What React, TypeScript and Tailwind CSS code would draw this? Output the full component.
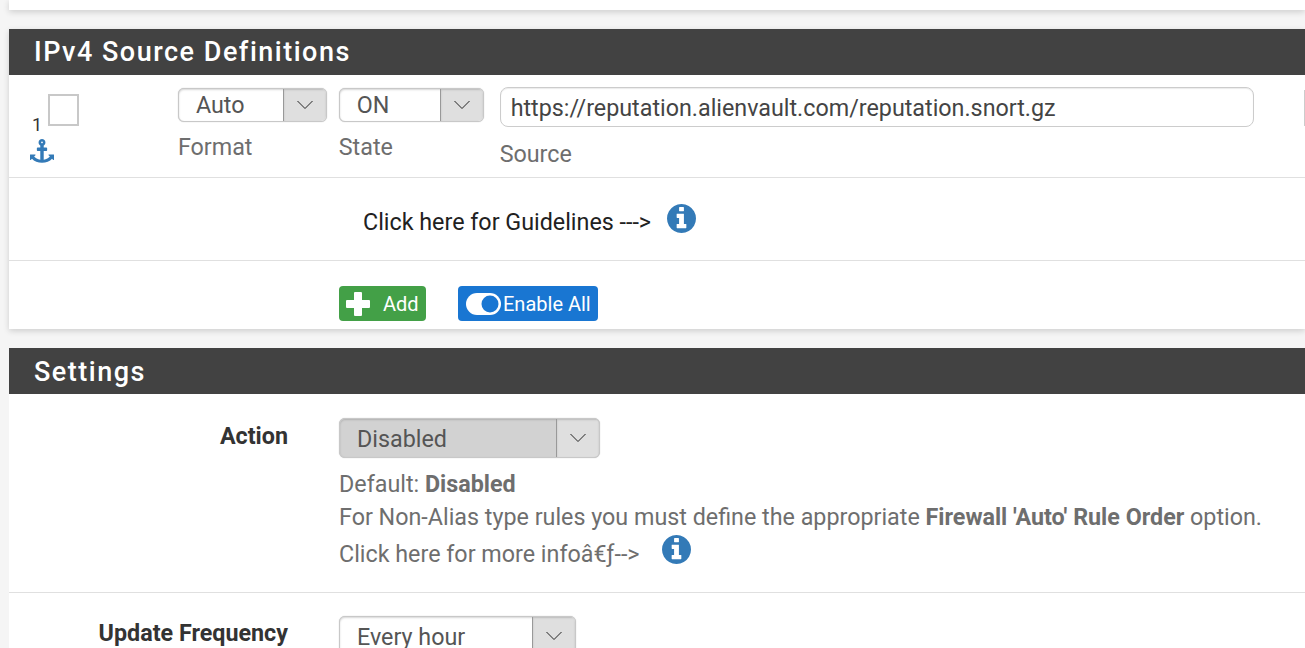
interface SelectProps {
  value: string
  width: string
  height: string
  arrow: string
  disabled?: boolean
  tall?: boolean
}

function InfoIcon({ className }: { className: string }) {
  return (
    <svg className={className} viewBox="0 128 1536 1536" fill="currentColor">
      <path d="M1024 1376v-160q0-14-9-23t-23-9h-96v-512q0-14-9-23t-23-9h-320q-14 0-23 9t-9 23v160q0 14 9 23t23 9h96v320h-96q-14 0-23 9t-9 23v160q0 14 9 23t23 9h448q14 0 23-9t9-23zm-128-896v-160q0-14-9-23t-23-9h-192q-14 0-23 9t-9 23v160q0 14 9 23t23 9h192q14 0 23-9t9-23zm640 416q0 209-103 385.5t-279.5 279.5-385.5 103-385.5-103-279.5-279.5-103-385.5 103-385.5 279.5-279.5 385.5-103 385.5 103 279.5 279.5 103 385.5z" />
    </svg>
  )
}

function AnchorIcon({ className }: { className: string }) {
  return (
    <svg className={className} viewBox="0 0 1792 1792" fill="currentColor">
      <path d="M960 256q0-26-19-45t-45-19-45 19-19 45 19 45 45 19 45-19 19-45zm832 928v352q0 22-20 30-8 2-12 2-12 0-23-9l-93-93q-119 143-318.5 226.5t-429.5 83.5-429.5-83.5-318.5-226.5l-93 93q-9 9-23 9-4 0-12-2-20-8-20-30v-352q0-14 9-23t23-9h352q22 0 30 20 8 19-7 35l-100 100q67 91 189.5 153.5t271.5 82.5v-647h-192q-26 0-45-19t-19-45v-128q0-26 19-45t45-19h192v-163q-58-34-93-92.5t-35-128.5q0-106 75-181t181-75 181 75 75 181q0 70-35 128.5t-93 92.5v163h192q26 0 45 19t19 45v128q0 26-19 45t-45 19h-192v647q149-20 271.5-82.5t189.5-153.5l-100-100q-15-16-7-35 8-20 30-20h352q14 0 23 9t9 23z" />
    </svg>
  )
}

function FakeSelect({ value, width, height, arrow, disabled, tall }: SelectProps) {
  return (
    <div
      className={`flex ${width} ${height} overflow-hidden rounded-[6px] border border-[#c8c8c8] shadow-[inset_0_1px_2px_rgba(0,0,0,0.16),0_0_1px_rgba(0,0,0,0.3)] ${
        disabled ? 'bg-[#d2d2d2]' : 'bg-white'
      }`}
    >
      <span className={`flex flex-1 items-center pl-[17px] text-[23.3px] text-[#555] ${tall ? 'pt-[3px]' : 'pt-[1px]'}`}>
        {value}
      </span>
      <span className={`${arrow} flex items-center justify-center border-l border-[#999] bg-[#dfdfdf] shadow-[inset_0_1px_2px_rgba(0,0,0,0.16)]`}>
        <svg width="18" height="10" viewBox="0 0 18 10" fill="none" stroke="#222" strokeWidth="1">
          <path d="M1.5 1 L9 8.5 L16.5 1" />
        </svg>
      </span>
    </div>
  )
}

function PanelHeading({ title, nudge }: { title: string; nudge?: boolean }) {
  return (
    <h2
      className={`h-[46px] bg-[#424242] pl-[25px] text-[27px] leading-[46px] font-medium tracking-[1.5px] text-white ${
        nudge ? 'pt-[1px]' : ''
      }`}
    >
      {title}
    </h2>
  )
}

export default function App() {
  return (
    <div className="h-[648px] overflow-hidden bg-[#f5f5f5] pl-[9px] font-['Roboto',sans-serif] text-[23.3px] text-[#212121]">
      <div className="h-[10px] bg-white shadow-[0_2px_6px_rgba(0,0,0,0.16)]" />

      <section className="mt-[19px] bg-white shadow-[0_2px_6px_rgba(0,0,0,0.16)]">
        <PanelHeading title="IPv4 Source Definitions" />

        <div className="flex h-[103px] border-b border-[#e0e0e0]">
          <div className="w-[169px] pl-[21px] pt-[19px]">
            <div className="flex items-end">
              <span className="mb-[-7px] w-[18px] pl-[2px] text-[18px] leading-[16px] text-[#333]">1</span>
              <span className="h-[32px] w-[31px] border-[2px] border-[#c8c8c8]" />
            </div>
            <AnchorIcon className="mt-[13px] size-[24px] text-[#337ab7]" />
          </div>
          <div className="w-[161px] pt-[13px]">
            <FakeSelect value="Auto" width="w-[149px]" height="h-[34px]" arrow="w-[43px]" />
            <p className="mt-[11px] leading-[28px] text-[#6e6e6e]">Format</p>
          </div>
          <div className="w-[161px] pt-[13px]">
            <FakeSelect value="ON" width="w-[145px]" height="h-[34px]" arrow="w-[43px]" />
            <p className="mt-[11px] leading-[28px] text-[#6e6e6e]">State</p>
          </div>
          <div className="w-[805px] pt-[12px]">
            <div className="flex h-[40px] w-[754px] items-center rounded-[8px] border border-[#ccc] pl-[10px] pt-[2px] text-[#444] shadow-[inset_0_1px_1px_rgba(0,0,0,0.08)]">
              https://reputation.alienvault.com/reputation.snort.gz
            </div>
            <p className="mt-[13px] leading-[28px] text-[#6e6e6e]">Source</p>
          </div>
          <div className="mt-[15px] h-[36px] w-[1px] flex-1 border-l border-[#ccc]" />
        </div>

        <div className="flex h-[83px] items-start border-b border-[#e0e0e0] pl-[354px] pt-[25px]">
          <span className="leading-[38px]">Click here for Guidelines ---&gt;</span>
          <InfoIcon className="ml-[16px] mt-[1px] size-[29px] text-[#337ab7]" />
        </div>

        <div className="flex h-[68px] items-start pl-[330px] pt-[25px] text-[20px] text-white">
          <button className="flex h-[35px] w-[87px] items-center rounded-[4px] bg-[#43a047] pl-[6px]">
            <svg width="26" height="26" viewBox="0 0 26 26" fill="#fff">
              <path d="M10 1 h6 a1 1 0 0 1 1 1 v7 h7 a1 1 0 0 1 1 1 v6 a1 1 0 0 1 -1 1 h-7 v7 a1 1 0 0 1 -1 1 h-6 a1 1 0 0 1 -1 -1 v-7 h-7 a1 1 0 0 1 -1 -1 v-6 a1 1 0 0 1 1 -1 h7 v-7 a1 1 0 0 1 1 -1 z" />
            </svg>
            <span className="ml-[12px]">Add</span>
          </button>
          <button className="ml-[32px] flex h-[35px] w-[140px] items-center rounded-[4px] bg-[#1976d2] pl-[8px]">
            <svg width="35" height="22" viewBox="0 0 35 22">
              <rect width="35" height="22" rx="11" fill="#fff" />
              <circle cx="24" cy="11" r="8.5" fill="#1976d2" />
            </svg>
            <span className="ml-[2px]">Enable All</span>
          </button>
        </div>
      </section>

      <section className="mt-[19px] bg-white">
        <PanelHeading title="Settings" nudge />

        <div className="flex h-[199px] border-b border-[#e0e0e0]">
          <div className="w-[279px] pt-[26px] text-right font-bold leading-[32px] text-[#333]">Action</div>
          <div className="ml-[51px] pt-[24px] text-[#6e6e6e]">
            <FakeSelect value="Disabled" width="w-[261px]" height="h-[40px]" arrow="w-[43px]" disabled tall />
            <p className="mt-[10px] leading-[33px]">
              Default: <b>Disabled</b>
            </p>
            <p className="whitespace-nowrap leading-[33px]">
              For Non-Alias type rules you must define the appropriate <b>Firewall 'Auto' Rule Order</b> option.
            </p>
            <div className="flex items-start">
              <span className="mt-[2px] leading-[37px]">Click here for more infoâ€ƒ--&gt;</span>
              <InfoIcon className="ml-[22px] mt-[1px] size-[29px] text-[#337ab7]" />
            </div>
          </div>
        </div>

        <div className="flex h-[56px]">
          <div className="w-[279px] pt-[24px] text-right font-bold leading-[32px] text-[#333]">Update Frequency</div>
          <div className="ml-[51px] pt-[23px]">
            <FakeSelect value="Every hour" width="w-[237px]" height="h-[40px]" arrow="w-[43px]" tall />
          </div>
        </div>
      </section>
    </div>
  )
}
